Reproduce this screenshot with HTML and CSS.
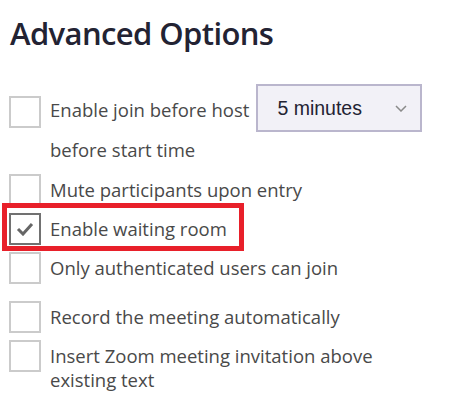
FILE: index.html
```html
<!DOCTYPE html>
<html lang="en">
<head>
    <meta charset="UTF-8">
    <meta name="viewport" content="width=device-width, initial-scale=1.0">
    <title>Advanced Options</title>
    <link rel="stylesheet" href="styles.css">
</head>
<body>
    <div class="panel">
        <h1 class="title">Advanced Options</h1>

        <div class="option option-join">
            <span class="box"></span>
            <span class="label">Enable join before host</span>
            <div class="select">
                <span class="select-value">5 minutes</span>
                <svg class="chevron" width="12" height="7" viewBox="0 0 12 7">
                    <path d="M1 1l5 5 5-5" fill="none" stroke="#8a8a8a" stroke-width="1.5"/>
                </svg>
            </div>
        </div>
        <div class="sub-label">before start time</div>

        <div class="option option-mute">
            <span class="box"></span>
            <span class="label">Mute participants upon entry</span>
        </div>

        <div class="option option-waiting">
            <span class="box checked">
                <svg width="18" height="14" viewBox="0 0 18 14">
                    <path d="M2 7l5 5 9-10" fill="none" stroke="#666" stroke-width="3"/>
                </svg>
            </span>
            <span class="label">Enable waiting room</span>
            <span class="highlight"></span>
        </div>

        <div class="option">
            <span class="box"></span>
            <span class="label">Only authenticated users can join</span>
        </div>

        <div class="option option-record">
            <span class="box"></span>
            <span class="label">Record the meeting automatically</span>
        </div>

        <div class="option">
            <span class="box"></span>
            <span class="label">Insert Zoom meeting invitation above existing text</span>
        </div>
    </div>
</body>
</html>
```

FILE: styles.css
```css
body {
    margin: 0;
    background-color: #fff;
    font-family: "Open Sans", "Noto Sans", sans-serif;
}
.panel {
    padding: 13px 9px 0 9px;
}
.title {
    margin: 0 0 31px 1px;
    font-size: 31px;
    line-height: 40px;
    font-weight: 600;
    letter-spacing: -0.6px;
    color: #232333;
}
.option {
    position: relative;
    display: flex;
    align-items: flex-start;
    gap: 9px;
    margin-top: 7px;
}
.box {
    flex: none;
    width: 32px;
    height: 32px;
    border: 2px solid #cbcbcb;
    box-sizing: border-box;
    display: flex;
    align-items: center;
    justify-content: center;
}
.box.checked {
    border-color: #717171;
}
.label {
    width: 335px;
    padding-top: 4px;
    font-size: 18.5px;
    line-height: 24px;
    color: #494949;
}
.option-join {
    margin-top: 0;
}
.option-join .box {
    margin-top: 12px;
}
.option-join .label {
    width: auto;
    padding-top: 14px;
}
.select {
    width: 166px;
    height: 48px;
    margin-left: -2px;
    box-sizing: border-box;
    border: 2px solid #bab6cd;
    background-color: #f2f1f7;
    display: flex;
    align-items: center;
    justify-content: space-between;
    padding: 0 13px 0 19px;
    font-family: "Liberation Sans", Arial, sans-serif;
    font-size: 19.5px;
    color: #232333;
}
.sub-label {
    margin: 6px 0 0 41px;
    font-size: 18.5px;
    line-height: 24px;
    color: #494949;
}
.option-mute {
    margin-top: 12px;
}
.option-record {
    margin-top: 17px;
}
.highlight {
    position: absolute;
    left: -7px;
    top: -10px;
    width: 242px;
    height: 48px;
    border: 5px solid #e8202a;
    box-sizing: border-box;
}
```
